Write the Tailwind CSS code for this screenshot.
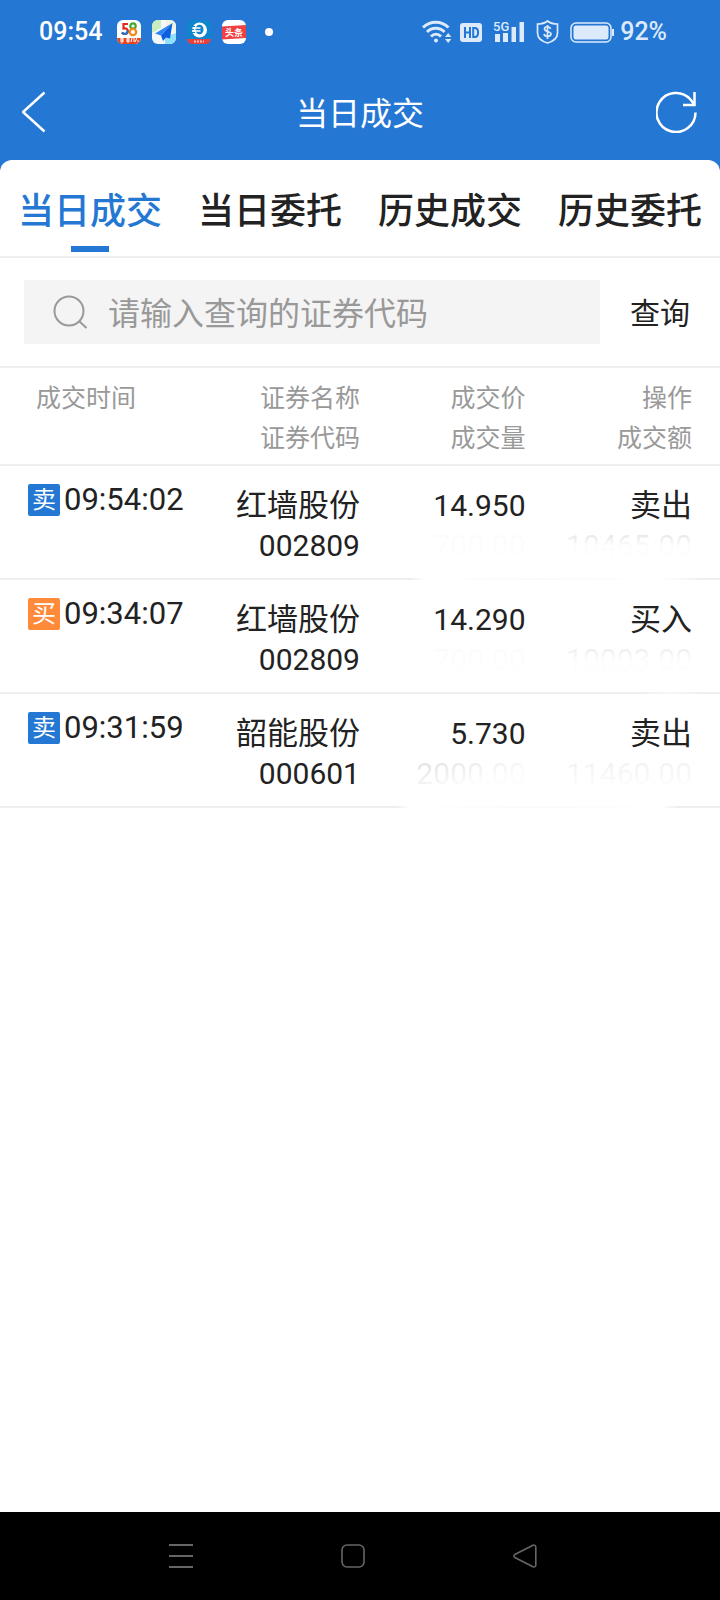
<!DOCTYPE html>
<html lang="zh-CN">
  <head>
    <meta charset="UTF-8" />
    <meta name="viewport" content="width=device-width, initial-scale=1.0" />
    <title>当日成交</title>
    <script src="https://cdn.jsdelivr.net/npm/@tailwindcss/browser@4"></script>
  </head>
  <body
    class="min-h-screen flex flex-col bg-white text-[#222222] font-[Roboto,'Noto_Sans_CJK_SC',sans-serif]"
  >
    <div class="bg-[#2577d4]">
      <!-- 状态栏 -->
      <div class="h-16 pl-[39px] pr-[53px] flex items-center justify-between text-[25px] leading-8 font-medium text-white">
        <div class="flex items-center gap-[11px]">
          <span class="mr-1">09:54</span>
          <svg class="size-6" viewBox="0 0 24 24">
            <rect width="24" height="24" rx="6" fill="#fff" />
            <path d="M0 18h24a6 6 0 0 1-6 6H6a6 6 0 0 1-6-6z" fill="#e8441f" />
            <path d="M11 4H6.500v4.500c5-1.500 6 5.500 1.500 5.500-1.500 0-2.500-.5-3-1.500" fill="none" stroke="#e02a20" stroke-width="2.200" />
            <path d="M5 12.500c2 2.500 6 1.500 5.500-2" fill="none" stroke="#1d6fd0" stroke-width="2.200" />
            <circle cx="16" cy="6" r="2.700" fill="none" stroke="#46a82e" stroke-width="2.200" />
            <circle cx="16" cy="12" r="3.200" fill="none" stroke="#f08a1d" stroke-width="2.200" />
            <path d="M3 19h4M3 21h4M5 18v5M9 19h4M9 21h4M11 18v5M15 18l-1 4M17 18v4M20 18l-2 4M21 20v2" stroke="#fff" />
          </svg>
          <svg class="size-6" viewBox="0 0 24 24">
            <rect width="24" height="24" rx="6" fill="#f4f8f8" />
            <path d="M6 0h3v8L0 13V6a6 6 0 0 1 6-6z" fill="#c9ecc0" />
            <path d="M14 0h4a6 6 0 0 1 6 6v5L14 5z" fill="#f0f3e4" />
            <path d="M13 24v-7l11-4v5a6 6 0 0 1-6 6z" fill="#8fe0fa" />
            <path d="M20.500 3 3 13.500l6 2z" fill="#2c86f5" />
            <path d="M20.500 3 9 15.500 11 21l3-3.500 4 1z" fill="#0e5fe0" />
          </svg>
          <svg class="size-6" viewBox="0 0 24 24">
            <rect width="24" height="24" rx="6" fill="#0f86cc" />
            <path d="M0 19h24a6 6 0 0 1-6 5H6a6 6 0 0 1-6-5z" fill="#e8403c" />
            <circle cx="12.500" cy="10" r="7.500" fill="#fff" />
            <ellipse cx="12.500" cy="9.500" rx="4" ry="4.800" fill="#0f86cc" />
            <path d="M6.500 8h7M6.500 11h7" stroke="#fff" stroke-width="1.400" />
            <path d="M4 6.500h4M4 9.500h3M4 12.500h4" stroke="#0f86cc" />
            <path d="M7 21.500h10" stroke="#fbb" stroke-width="2" stroke-dasharray="2 1" />
          </svg>
          <svg class="size-6" viewBox="0 0 24 24">
            <rect width="24" height="24" rx="6" fill="#fff" />
            <path d="M0 6.500 24 5v13L0 19.500z" fill="#f04142" />
            <text x="12" y="16" text-anchor="middle" font-size="9" font-weight="700" fill="#fff" font-family="Noto Sans CJK SC, sans-serif">头条</text>
          </svg>
          <span class="ml-2 size-2 rounded-full bg-white"></span>
        </div>
        <div class="flex items-center gap-[11px] text-[#dceafb]">
          <div class="flex items-center gap-2">
            <svg class="w-[30px] h-6" viewBox="0 0 30 24" fill="none" stroke="currentColor" stroke-width="3">
              <path d="M1 7.500c7-7 18.500-7 25.500 0M5 12c5-5 12.500-5 17.500 0M9 16.500c3-3 7-3 10 0" />
              <circle cx="14" cy="20.500" r="2" fill="currentColor" stroke="none" />
              <path d="m23 17 3.200-4 3.200 4zM23 19l3.200 4 3.200-4z" fill="currentColor" stroke="none" />
            </svg>
            <svg class="w-[22px] h-6" viewBox="0 0 22 24">
              <rect y="3" width="22" height="19" rx="3" fill="currentColor" />
              <path d="M5 7v11M10 7v11M5 12.500h5M13.200 8h1.500c4.500 0 4.500 9 0 9h-1.500z" fill="none" stroke="#2577d4" stroke-width="2" />
            </svg>
          </div>
          <svg class="w-8 h-6" viewBox="0 0 32 24" fill="currentColor">
            <text x="0" y="11" font-size="13" font-weight="500" font-family="Roboto, sans-serif">5G</text>
            <path d="M2 14h5v8H2zM10 13h5v9h-5zM18.500 7H23v15h-4.500zM26.500 2H31v20h-4.500z" />
          </svg>
          <svg class="w-[23px] h-6" viewBox="0 0 23 24" fill="none" stroke="currentColor" stroke-width="1.700">
            <path d="M11.500 1C9 3 5 4 1.500 4v9c0 5 5 8.500 10 10 5-1.500 10-5 10-10V4c-3.500 0-7.500-1-10-3z" />
            <path d="M14.500 9c-.5-3-6-3-6 0 0 3 6.500 2 6.500 5 0 3-6.500 3-7 0M11.500 5v14" />
          </svg>
          <div class="flex items-center gap-1.5">
            <svg class="w-11 h-6" viewBox="0 0 44 24">
              <rect x="1" y="3" width="40" height="19" rx="5" fill="none" stroke="currentColor" stroke-width="1.500" />
              <rect x="3.500" y="5.500" width="35" height="14" rx="2.500" fill="currentColor" />
              <path d="M43 9v7" stroke="currentColor" stroke-width="2" />
            </svg>
            <span>92%</span>
          </div>
        </div>
      </div>

      <!-- 标题栏 -->
      <header class="h-24 px-[22px] flex items-center justify-between text-white">
        <button type="button" aria-label="返回">
          <svg class="w-[42px] h-[42px]" viewBox="0 0 42 42" fill="none" stroke="currentColor" stroke-width="2.500">
            <path d="M22.500 1.500 1 21l21.500 19.500" />
          </svg>
        </button>
        <h1 class="pt-1 text-[32px] leading-10">当日成交</h1>
        <button type="button" aria-label="刷新">
          <svg class="w-[42px] h-[42px]" viewBox="0 0 42 42" fill="none" stroke="currentColor" stroke-width="2.500">
            <path d="M39.500 21.500A19.500 19.500 0 1 1 34.500 8.500l3 4" />
            <path d="M38.500 1v13H27" />
          </svg>
        </button>
      </header>

      <!-- 页签 -->
      <nav class="flex rounded-t-xl bg-white border-b-2 border-[#eeeeee] text-4xl font-medium">
        <a href="#" class="flex-1 h-24 pt-7 flex flex-col items-center gap-2.5 text-[#2577d4]">
          <span class="leading-[48px]">当日成交</span>
          <span class="w-[38px] h-1.5 bg-[#2577d4]"></span>
        </a>
        <a href="#" class="flex-1 h-24 pt-7 text-center leading-[48px]">当日委托</a>
        <a href="#" class="flex-1 h-24 pt-7 text-center leading-[48px]">历史成交</a>
        <a href="#" class="flex-1 h-24 pt-7 text-center leading-[48px]">历史委托</a>
      </nav>
    </div>

    <!-- 查询 -->
    <form class="flex items-center gap-[30px] py-[22px] pl-6 pr-[30px] border-b-2 border-[#eeeeee]">
      <label class="flex-1 min-w-0 h-16 px-7 flex items-center gap-5 bg-[#f4f4f4]">
        <svg class="shrink-0 size-9" viewBox="0 0 36 36" fill="none" stroke="#999999" stroke-width="2">
          <circle cx="17" cy="17" r="14.500" />
          <path d="m27 27 7.500 7" />
        </svg>
        <input
          type="text"
          aria-label="证券代码"
          placeholder="请输入查询的证券代码"
          class="flex-1 min-w-0 h-14 pt-1 text-[32px] outline-none placeholder:text-[#999999]"
        />
      </label>
      <button type="button" class="pt-1 text-[30px] leading-10">查询</button>
    </form>

    <!-- 成交列表 -->
    <table class="w-full table-fixed text-right text-[31px] leading-10">
      <thead class="text-[25px] text-[#999999]">
        <tr class="border-b-2 border-[#eeeeee] align-top">
          <th class="w-[27%] pt-[11px] pl-9 text-left font-normal">成交时间</th>
          <th class="w-[23%] pt-[11px] pb-[5px] font-normal">证券名称<br />证券代码</th>
          <th class="w-[23%] pt-[11px] pb-[5px] font-normal">成交价<br />成交量</th>
          <th class="w-[27%] pt-[11px] pb-[5px] pr-7 font-normal">操作<br />成交额</th>
        </tr>
      </thead>
      <tbody>
        <tr class="align-top bg-[linear-gradient(to_right,#eeeeee_57%,#ffffff_59%,#fafafa_75%,#ffffff_92%,#eeeeee_98%)] bg-[length:100%_2px] bg-bottom bg-no-repeat">
          <td class="pt-3.5 pl-7">
            <div class="flex items-center gap-1">
              <span class="size-8 rounded-xs bg-[#2577d4] text-center text-2xl leading-8 text-white">卖</span>
              <span>09:54:02</span>
            </div>
          </td>
          <td class="pt-5 pb-3.5">
            <div>红墙股份</div>
            <div class="text-[30px]">002809</div>
          </td>
          <td class="pt-5 pb-3.5 text-[30px]">
            <div>14.950</div>
            <div class="bg-linear-to-b from-[#fafafa] to-white bg-clip-text text-transparent">700.00</div>
          </td>
          <td class="pt-5 pb-3.5 pr-7">
            <div>卖出</div>
            <div class="bg-linear-to-b from-[#e6e6e6] from-20% to-[#fdfdfd] to-50% bg-clip-text text-[30px] text-transparent">10465.00</div>
          </td>
        </tr>
        <tr class="align-top bg-[linear-gradient(to_right,#eeeeee_88%,#f7f7f7_93%,#eeeeee_98%)] bg-[length:100%_2px] bg-bottom bg-no-repeat">
          <td class="pt-3.5 pl-7">
            <div class="flex items-center gap-1">
              <span class="size-8 rounded-xs bg-[#ff8b3a] text-center text-2xl leading-8 text-white">买</span>
              <span>09:34:07</span>
            </div>
          </td>
          <td class="pt-5 pb-3.5">
            <div>红墙股份</div>
            <div class="text-[30px]">002809</div>
          </td>
          <td class="pt-5 pb-3.5 text-[30px]">
            <div>14.290</div>
            <div class="bg-linear-to-b from-[#fafafa] to-white bg-clip-text text-transparent">700.00</div>
          </td>
          <td class="pt-5 pb-3.5 pr-7">
            <div>买入</div>
            <div class="bg-linear-to-b from-[#ececec] from-20% to-[#fdfdfd] to-50% bg-clip-text text-[30px] text-transparent">10003.00</div>
          </td>
        </tr>
        <tr class="align-top bg-[linear-gradient(to_right,#eeeeee_55%,#ffffff_57%,#fafafa_75%,#ffffff_92%,#eeeeee_94%)] bg-[length:100%_2px] bg-bottom bg-no-repeat">
          <td class="pt-3.5 pl-7">
            <div class="flex items-center gap-1">
              <span class="size-8 rounded-xs bg-[#2577d4] text-center text-2xl leading-8 text-white">卖</span>
              <span>09:31:59</span>
            </div>
          </td>
          <td class="pt-5 pb-3.5">
            <div>韶能股份</div>
            <div class="text-[30px]">000601</div>
          </td>
          <td class="pt-5 pb-3.5 text-[30px]">
            <div>5.730</div>
            <div class="bg-linear-to-br from-[#dddddd] from-20% to-[#fcfcfc] to-70% bg-clip-text text-transparent">2000.00</div>
          </td>
          <td class="pt-5 pb-3.5 pr-7">
            <div>卖出</div>
            <div class="bg-linear-to-b from-[#f2f2f2] from-20% to-[#fdfdfd] to-80% bg-clip-text text-[30px] text-transparent">11460.00</div>
          </td>
        </tr>
      </tbody>
    </table>

    <!-- 系统导航键 -->
    <footer class="mt-auto h-[88px] pr-3.5 flex items-center justify-center gap-[148px] bg-black text-[#666666]">
      <button type="button" aria-label="菜单">
        <svg class="size-6" viewBox="0 0 24 24" fill="none" stroke="currentColor" stroke-width="2">
          <path d="M0 1h24M0 12h24M0 23h24" />
        </svg>
      </button>
      <button type="button" aria-label="主页">
        <svg class="size-6" viewBox="0 0 24 24" fill="none" stroke="currentColor" stroke-width="1.600">
          <rect x="1" y="1" width="22" height="22" rx="5" />
        </svg>
      </button>
      <button type="button" aria-label="返回上一页">
        <svg class="size-6" viewBox="0 0 24 24" fill="none" stroke="currentColor" stroke-width="1.600" stroke-linejoin="round">
          <path d="M20 1.200 1.800 10.500q-1.800 1.500 0 3L20 22.800q2.500.7 2.800-1.800V3q-.3-2.500-2.800-1.800z" />
        </svg>
      </button>
    </footer>
  </body>
</html>
